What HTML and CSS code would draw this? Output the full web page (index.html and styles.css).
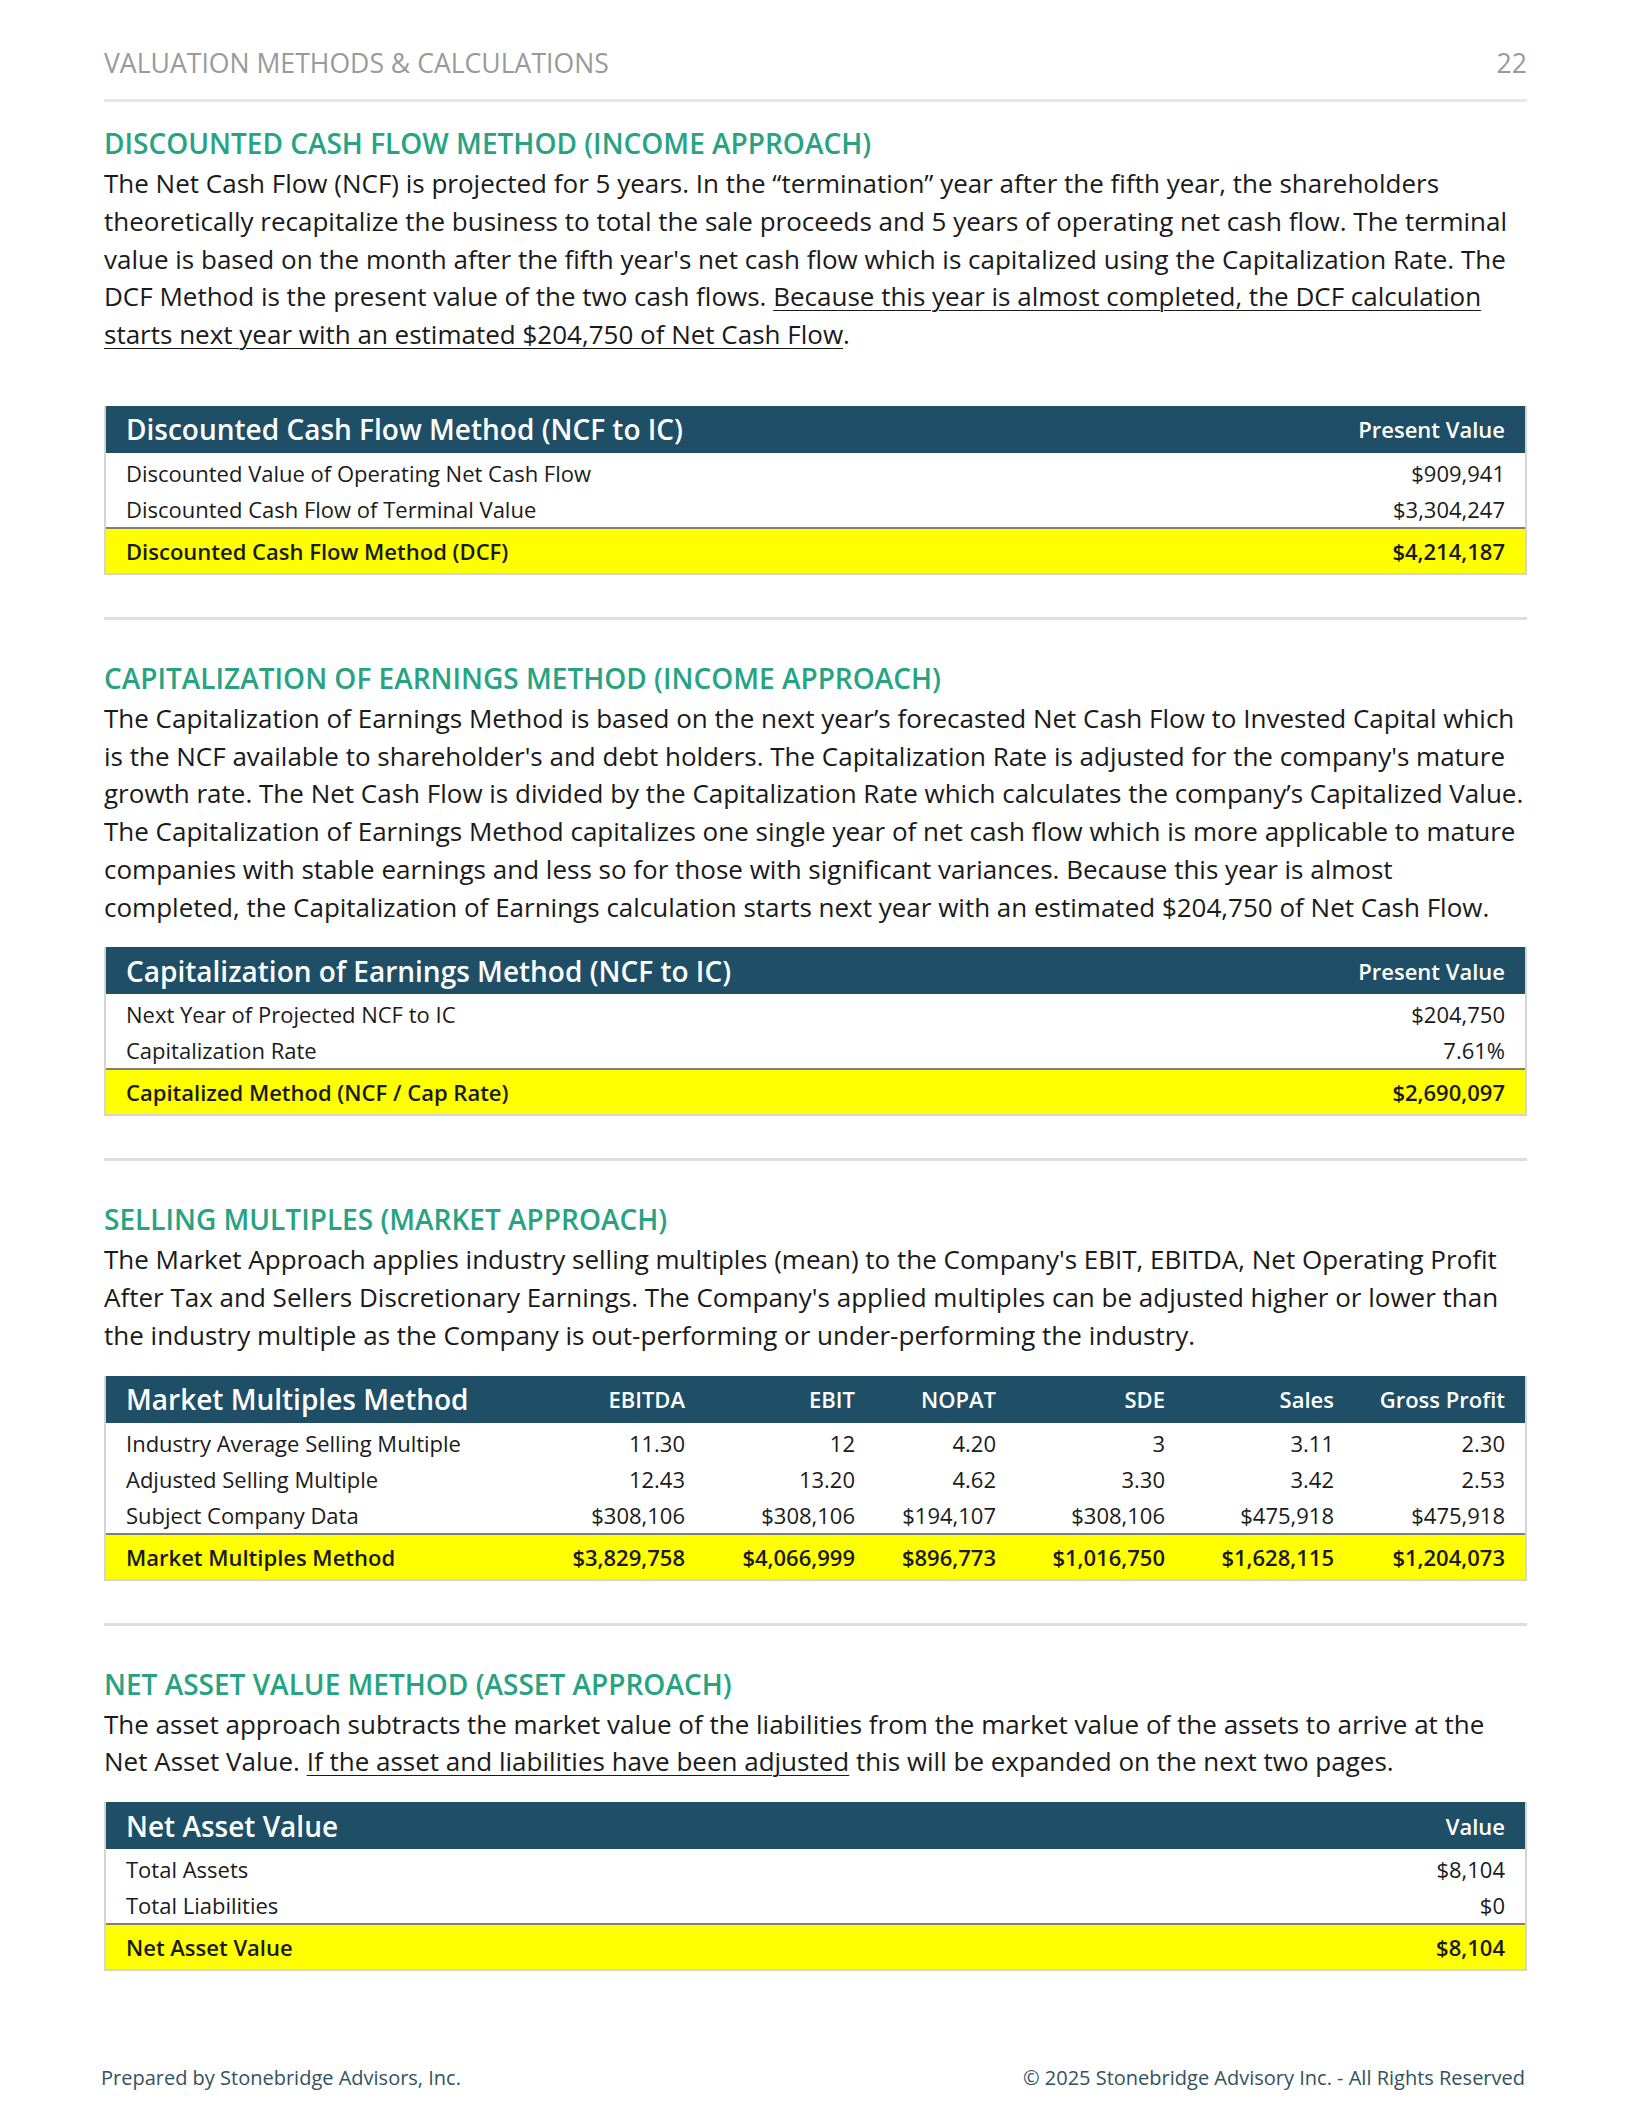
FILE: index.html
```html
<!DOCTYPE html>
<html lang="en">
<head>
<meta charset="utf-8">
<title>Valuation Methods &amp; Calculations</title>
<link rel="stylesheet" href="styles.css">
</head>
<body>
<div class="page">
  <header class="page-head">
    <span class="page-title">VALUATION METHODS &amp; CALCULATIONS</span>
    <span class="page-num">22</span>
  </header>

  <section class="section section--first">
    <h2 class="sec-title">DISCOUNTED CASH FLOW METHOD (INCOME APPROACH)</h2>
    <p class="sec-text sec-text--gap">The Net Cash Flow (NCF) is projected for 5 years. In the “termination” year after the fifth year, the shareholders theoretically recapitalize the business to total the sale proceeds and 5 years of operating net cash flow. The terminal value is based on the month after the fifth year's net cash flow which is capitalized using the Capitalization Rate. The DCF Method is the present value of the two cash flows. <u>Because this year is almost completed, the DCF calculation starts next year with an estimated $204,750 of Net Cash Flow</u>.</p>
    <div class="vtable">
      <div class="vt-head"><span class="vt-title">Discounted Cash Flow Method (NCF to IC)</span><span class="vt-col">Present Value</span></div>
      <div class="vt-row"><span>Discounted Value of Operating Net Cash Flow</span><span>$909,941</span></div>
      <div class="vt-row"><span>Discounted Cash Flow of Terminal Value</span><span>$3,304,247</span></div>
      <div class="vt-row vt-total"><span>Discounted Cash Flow Method (DCF)</span><span>$4,214,187</span></div>
    </div>
  </section>

  <section class="section">
    <h2 class="sec-title">CAPITALIZATION OF EARNINGS METHOD (INCOME APPROACH)</h2>
    <p class="sec-text">The Capitalization of Earnings Method is based on the next year’s forecasted Net Cash Flow to Invested Capital which is the NCF available to shareholder's and debt holders. The Capitalization Rate is adjusted for the company's mature growth rate. The Net Cash Flow is divided by the Capitalization Rate which calculates the company’s Capitalized Value. The Capitalization of Earnings Method capitalizes one single year of net cash flow which is more applicable to mature companies with stable earnings and less so for those with significant variances. Because this year is almost completed, the Capitalization of Earnings calculation starts next year with an estimated $204,750 of Net Cash Flow.</p>
    <div class="vtable">
      <div class="vt-head"><span class="vt-title">Capitalization of Earnings Method (NCF to IC)</span><span class="vt-col">Present Value</span></div>
      <div class="vt-row"><span>Next Year of Projected NCF to IC</span><span>$204,750</span></div>
      <div class="vt-row"><span>Capitalization Rate</span><span>7.61%</span></div>
      <div class="vt-row vt-total"><span>Capitalized Method (NCF / Cap Rate)</span><span>$2,690,097</span></div>
    </div>
  </section>

  <section class="section">
    <h2 class="sec-title">SELLING MULTIPLES (MARKET APPROACH)</h2>
    <p class="sec-text">The Market Approach applies industry selling multiples (mean) to the Company's EBIT, EBITDA, Net Operating Profit After Tax and Sellers Discretionary Earnings. The Company's applied multiples can be adjusted higher or lower than the industry multiple as the Company is out-performing or under-performing the industry.</p>
    <div class="vtable mtable">
      <div class="vt-head"><span class="vt-title">Market Multiples Method</span><span class="vt-col">EBITDA</span><span class="vt-col">EBIT</span><span class="vt-col">NOPAT</span><span class="vt-col">SDE</span><span class="vt-col">Sales</span><span class="vt-col">Gross Profit</span></div>
      <div class="vt-row"><span>Industry Average Selling Multiple</span><span>11.30</span><span>12</span><span>4.20</span><span>3</span><span>3.11</span><span>2.30</span></div>
      <div class="vt-row"><span>Adjusted Selling Multiple</span><span>12.43</span><span>13.20</span><span>4.62</span><span>3.30</span><span>3.42</span><span>2.53</span></div>
      <div class="vt-row"><span>Subject Company Data</span><span>$308,106</span><span>$308,106</span><span>$194,107</span><span>$308,106</span><span>$475,918</span><span>$475,918</span></div>
      <div class="vt-row vt-total"><span>Market Multiples Method</span><span>$3,829,758</span><span>$4,066,999</span><span>$896,773</span><span>$1,016,750</span><span>$1,628,115</span><span>$1,204,073</span></div>
    </div>
  </section>

  <section class="section section--last">
    <h2 class="sec-title">NET ASSET VALUE METHOD (ASSET APPROACH)</h2>
    <p class="sec-text">The asset approach subtracts the market value of the liabilities from the market value of the assets to arrive at the Net Asset Value. <u>If the asset and liabilities have been adjusted</u> this will be expanded on the next two pages.</p>
    <div class="vtable">
      <div class="vt-head"><span class="vt-title">Net Asset Value</span><span class="vt-col">Value</span></div>
      <div class="vt-row"><span>Total Assets</span><span>$8,104</span></div>
      <div class="vt-row"><span>Total Liabilities</span><span>$0</span></div>
      <div class="vt-row vt-total"><span>Net Asset Value</span><span>$8,104</span></div>
    </div>
  </section>

  <footer class="page-foot">
    <span>Prepared by Stonebridge Advisors, Inc.</span>
    <span>© 2025 Stonebridge Advisory Inc. - All Rights Reserved</span>
  </footer>
</div>
</body>
</html>
```

FILE: styles.css
```css
html, body {
  margin: 0;
  padding: 0;
  background: #ffffff;
}

body {
  font-family: "Open Sans", "Noto Sans", "Liberation Sans", sans-serif;
  color: #1a1a1a;
}

.page {
  width: 1631px;
  height: 2113px;
  box-sizing: border-box;
  padding: 44px 104px 0 104px;
  display: flex;
  flex-direction: column;
}

.page-head {
  display: flex;
  justify-content: space-between;
  align-items: center;
  font-size: 26.6px;
  color: #9a9a9a;
  line-height: 38px;
  padding-bottom: 17px;
  border-bottom: 3px solid #e8e8e8;
}

.section {
  padding-top: 39px;
  padding-bottom: 42px;
  border-bottom: 3px solid #dedede;
}

.section--first {
  padding-top: 22px;
}

.section--last {
  border-bottom: none;
}

.sec-title {
  margin: 0 0 3px 0;
  font-size: 28px;
  font-weight: 600;
  color: #27a382;
  line-height: 38px;
}

.sec-text {
  margin: 0 0 21px 0;
  font-size: 26px;
  line-height: 37.75px;
}

.sec-text--gap {
  margin-bottom: 52px;
}

.sec-text u {
  text-decoration-thickness: 1px;
  text-underline-offset: 4px;
}

.vtable {
  border: 2px solid #d4d4d4;
  border-top: none;
}

.vt-head {
  display: flex;
  justify-content: space-between;
  align-items: center;
  background: #1e4f66;
  color: #ffffff;
  height: 47px;
  padding: 0 20px 0 20px;
}

.vt-title {
  font-size: 28px;
  font-weight: 600;
}

.vt-col {
  font-size: 22px;
  font-weight: 600;
}

.vt-row {
  display: flex;
  justify-content: space-between;
  align-items: center;
  height: 36px;
  padding: 0 20px 0 20px;
  font-size: 22px;
}

.vt-head + .vt-row {
  margin-top: 2px;
}

.vt-total {
  background: #ffff00;
  font-weight: 600;
  height: 44px;
  border-top: 2px solid #7d7d7d;
}

.mtable .vt-head,
.mtable .vt-row {
  display: grid;
  grid-template-columns: 1fr 170px 170px 141px 169px 169px 171px;
}

.mtable .vt-head > span:not(:first-child),
.mtable .vt-row > span:not(:first-child) {
  text-align: right;
}

.page-foot {
  margin-top: auto;
  display: flex;
  justify-content: space-between;
  font-size: 20px;
  color: #33525e;
  padding: 0 0 22px 0;
  margin-left: -3px;
  margin-right: 2px;
}
```
